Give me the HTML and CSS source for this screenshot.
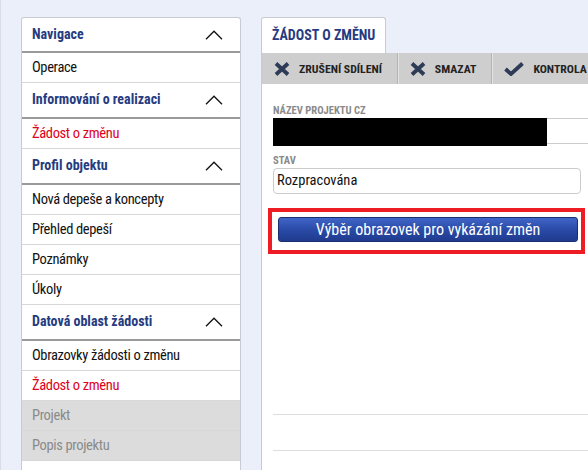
FILE: index.html
```html
<!DOCTYPE html>
<html lang="cs">
<head>
<meta charset="utf-8">
<title>Žádost o změnu</title>
<link rel="stylesheet" href="styles.css">
</head>
<body>
<nav class="sidebar">
  <div class="sb-head"><span>Navigace</span><svg class="chev" width="18" height="10" viewBox="0 0 18 10"><polyline points="1,9.2 9,1.2 17,9.2" fill="none" stroke="#111" stroke-width="1.3"/></svg></div>
  <div class="sb-item">Operace</div>
  <div class="sb-head"><span>Informování o realizaci</span><svg class="chev" width="18" height="10" viewBox="0 0 18 10"><polyline points="1,9.2 9,1.2 17,9.2" fill="none" stroke="#111" stroke-width="1.3"/></svg></div>
  <div class="sb-item active">Žádost o změnu</div>
  <div class="sb-head"><span>Profil objektu</span><svg class="chev" width="18" height="10" viewBox="0 0 18 10"><polyline points="1,9.2 9,1.2 17,9.2" fill="none" stroke="#111" stroke-width="1.3"/></svg></div>
  <div class="sb-item">Nová depeše a koncepty</div>
  <div class="sb-item">Přehled depeší</div>
  <div class="sb-item">Poznámky</div>
  <div class="sb-item">Úkoly</div>
  <div class="sb-head"><span>Datová oblast žádosti</span><svg class="chev" width="18" height="10" viewBox="0 0 18 10"><polyline points="1,9.2 9,1.2 17,9.2" fill="none" stroke="#111" stroke-width="1.3"/></svg></div>
  <div class="sb-item">Obrazovky žádosti o změnu</div>
  <div class="sb-item active">Žádost o změnu</div>
  <div class="sb-item disabled">Projekt</div>
  <div class="sb-item disabled">Popis projektu</div>
</nav>

<main class="panel">
  <div class="tabs"><div class="tab">ŽÁDOST O ZMĚNU</div></div>
  <div class="panel-body">
    <div class="toolbar">
      <div class="tool">
        <svg width="16" height="14" viewBox="0 0 16 14"><path d="M2 1.5 L14 12.5 M14 1.5 L2 12.5" stroke="#2e3b57" stroke-width="3.8" fill="none"/></svg>
        <span>ZRUŠENÍ SDÍLENÍ</span>
      </div>
      <div class="tool">
        <svg width="16" height="14" viewBox="0 0 16 14"><path d="M2 1.5 L14 12.5 M14 1.5 L2 12.5" stroke="#2e3b57" stroke-width="3.8" fill="none"/></svg>
        <span>SMAZAT</span>
      </div>
      <div class="tool">
        <svg width="20" height="14" viewBox="0 0 20 14"><path d="M1.5 7 L7 12 L18.5 1.5" stroke="#2e3b57" stroke-width="3.8" fill="none"/></svg>
        <span>KONTROLA</span>
      </div>
    </div>
    <div class="content">
      <div class="field">
        <div class="label">NÁZEV PROJEKTU CZ</div>
        <div class="input wide"><div class="redact"></div></div>
      </div>
      <div class="field">
        <div class="label">STAV</div>
        <div class="input">Rozpracována</div>
      </div>
      <div class="highlight">
        <div class="btn">Výběr obrazovek pro vykázání změn</div>
      </div>
      <div class="rule rule1"></div>
      <div class="rule rule2"></div>
    </div>
  </div>
</main>
</body>
</html>
```
FILE: styles.css
```css
html, body {
  margin: 0;
  height: 470px;
  overflow: hidden;
}
body {
  background: #ebeffa;
  border-left: 1px solid #d9dce6;
  box-sizing: border-box;
  display: flex;
  align-items: flex-start;
  gap: 20px;
  padding: 17px 0 0 20px;
  font-family: "Roboto Condensed", "Liberation Sans Narrow", sans-serif;
  color: #111;
}

/* Sidebar */
.sidebar {
  flex: 0 0 220px;
  box-sizing: border-box;
  background: #fff;
  border: 1px solid #c9cbd2;
  border-bottom: none;
  border-radius: 3px 3px 0 0;
  height: 460px;
}
.sb-head {
  height: 34px;
  border-bottom: 2px solid #9a9a9a;
  display: flex;
  align-items: center;
  justify-content: space-between;
  padding: 0 17px 0 10px;
  font-weight: 700;
  font-size: 14px;
  color: #263b80;
}
.sb-head:first-child { height: 33px; }
.sb-head span { margin-top: -2px; }
.chev { display: block; }
.sb-item {
  height: 29px;
  line-height: 29px;
  border-bottom: 1px solid #d8d8d8;
  padding-left: 10px;
  font-size: 14.5px;
  letter-spacing: -0.35px;
  color: #111;
}
.sb-item.active { color: #e0001b; }
.sb-item.disabled { background: #dcdcdc; color: #8a8a8a; }

/* Panel */
.panel {
  flex: 0 0 400px;
  display: flex;
  flex-direction: column;
}
.tabs { display: flex; }
.tab {
  width: 113px;
  height: 35px;
  line-height: 35px;
  padding-left: 10px;
  background: #fff;
  border: 1px solid #c9cbd2;
  border-bottom: none;
  border-radius: 3px 3px 0 0;
  font-weight: 700;
  font-size: 14px;
  color: #263b80;
}
.panel-body {
  background: #fff;
  border-left: 1px solid #c9cbd2;
  height: 420px;
}
.toolbar {
  height: 31px;
  background: #cecece;
  display: flex;
}
.tool {
  display: flex;
  align-items: center;
  gap: 9px;
  padding: 0 15px 0 12px;
  border-right: 1px solid #b3b3b3;
  box-shadow: inset 1px 0 #e4e4e4;
  font-weight: 700;
  font-size: 11.8px;
  color: #222;
}
.tool:first-child { box-shadow: none; }
.tool svg { display: block; }

.content {
  padding: 18px 0 0 11px;
}
.field { margin-bottom: 8px; }
.label {
  font-size: 10.6px;
  font-weight: 700;
  color: #8a8a8a;
  height: 16px;
  line-height: 17px;
}
.input {
  position: relative;
  width: 303px;
  height: 24px;
  line-height: 24px;
  border: 1px solid #cccccc;
  border-radius: 4px;
  padding-left: 3px;
  font-size: 14.5px;
  color: #111;
}
.input.wide { width: 360px; }
.redact {
  position: absolute;
  left: -1px;
  top: -1px;
  width: 274px;
  height: 28px;
  background: #000;
}
.highlight {
  margin: 14px 0 0 -5px;
  width: 300px;
  border: 4px solid #ee1c25;
  padding: 5px 3px 8px 6px;
}
.btn {
  height: 23px;
  line-height: 23px;
  border: 1px solid #1b2f70;
  border-radius: 3px;
  background: linear-gradient(#3f65c8, #2b4ba8 50%, #1f3b8e);
  color: #fff;
  text-align: center;
  font-size: 16px;
}
.rule {
  height: 1px;
  background: #dedede;
  width: 400px;
}
.rule1 { margin-top: 160px; }
.rule2 { margin-top: 35px; }
```
